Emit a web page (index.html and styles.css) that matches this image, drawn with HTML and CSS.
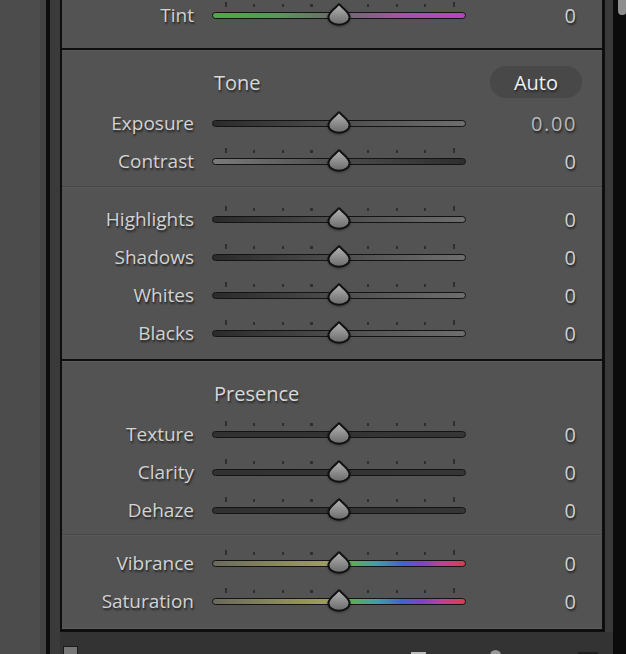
FILE: index.html
```html
<!DOCTYPE html>
<html>
<head>
<meta charset="utf-8">
<link rel="stylesheet" href="styles.css">
</head>
<body>
<div class="rail-a"></div>
<div class="rail-b"></div>
<div class="rail-c"></div>
<div class="rail-d"></div>
<div class="main">
  <div class="panel-wrap">
    <div class="panel">
      <div class="section first">
        <div class="row short">
          <span class="label">Tint</span>
          <div class="track tint"><svg class="thumb" viewBox="0 0 24 23"><use href="#drop"/></svg></div>
          <span class="value">0</span>
        </div>
      </div>

      <div class="section tone">
        <div class="head">
          <span class="title">Tone</span>
          <span class="auto">Auto</span>
        </div>
        <div class="group g1">
          <div class="row">
            <span class="label">Exposure</span>
            <div class="track up notick"><svg class="thumb" viewBox="0 0 24 23"><use href="#drop"/></svg></div>
            <span class="value dim">0.00</span>
          </div>
          <div class="row">
            <span class="label">Contrast</span>
            <div class="track down"><svg class="thumb" viewBox="0 0 24 23"><use href="#drop"/></svg></div>
            <span class="value">0</span>
          </div>
        </div>
        <div class="sep"></div>
        <div class="group g2">
          <div class="row">
            <span class="label">Highlights</span>
            <div class="track up"><svg class="thumb" viewBox="0 0 24 23"><use href="#drop"/></svg></div>
            <span class="value">0</span>
          </div>
          <div class="row">
            <span class="label">Shadows</span>
            <div class="track up"><svg class="thumb" viewBox="0 0 24 23"><use href="#drop"/></svg></div>
            <span class="value">0</span>
          </div>
          <div class="row">
            <span class="label">Whites</span>
            <div class="track up"><svg class="thumb" viewBox="0 0 24 23"><use href="#drop"/></svg></div>
            <span class="value">0</span>
          </div>
          <div class="row">
            <span class="label">Blacks</span>
            <div class="track up"><svg class="thumb" viewBox="0 0 24 23"><use href="#drop"/></svg></div>
            <span class="value">0</span>
          </div>
        </div>
      </div>

      <div class="section presence">
        <div class="head">
          <span class="title">Presence</span>
        </div>
        <div class="group g3">
          <div class="row">
            <span class="label">Texture</span>
            <div class="track flat"><svg class="thumb" viewBox="0 0 24 23"><use href="#drop"/></svg></div>
            <span class="value">0</span>
          </div>
          <div class="row">
            <span class="label">Clarity</span>
            <div class="track flat"><svg class="thumb" viewBox="0 0 24 23"><use href="#drop"/></svg></div>
            <span class="value">0</span>
          </div>
          <div class="row">
            <span class="label">Dehaze</span>
            <div class="track flat"><svg class="thumb" viewBox="0 0 24 23"><use href="#drop"/></svg></div>
            <span class="value">0</span>
          </div>
        </div>
        <div class="sep"></div>
        <div class="group g4">
          <div class="row">
            <span class="label">Vibrance</span>
            <div class="track rainbow"><svg class="thumb" viewBox="0 0 24 23"><use href="#drop"/></svg></div>
            <span class="value">0</span>
          </div>
          <div class="row">
            <span class="label">Saturation</span>
            <div class="track rainbow"><svg class="thumb" viewBox="0 0 24 23"><use href="#drop"/></svg></div>
            <span class="value">0</span>
          </div>
        </div>
      </div>
    </div>
  </div>
  <div class="footer">
    <span class="f-square"></span>
    <span class="f-light"></span>
    <span class="f-circle"></span>
    <span class="f-dark"></span>
  </div>
</div>
<div class="scroll"><span class="scroll-thumb"></span></div>

<svg class="defs" width="0" height="0">
  <defs>
    <linearGradient id="thumbFill" x1="0" y1="0" x2="0" y2="1">
      <stop offset="0" stop-color="#b4b4b4"/>
      <stop offset="1" stop-color="#6a6a6a"/>
    </linearGradient>
    <path id="drop" d="M12 1.2 C14.2 3.8 22.6 9.2 22.6 14 A10.6 7.8 0 0 1 1.4 14 C1.4 9.2 9.8 3.8 12 1.2 Z" fill="url(#thumbFill)" stroke="#111" stroke-width="2" stroke-linejoin="round"/>
  </defs>
</svg>
</body>
</html>
```

FILE: styles.css
```css
html, body {
  margin: 0;
  padding: 0;
}
body {
  width: 626px;
  height: 654px;
  overflow: hidden;
  display: flex;
  background: #4c4c4c;
  font-family: "Open Sans", "DejaVu Sans", sans-serif;
}
.defs {
  position: absolute;
  width: 0;
  height: 0;
}
.rail-a { width: 40px; background: #4c4c4c; }
.rail-b { width: 6px; background: #444444; }
.rail-c { width: 4px; background: #0e0e0e; }
.rail-d { width: 10px; background: #3a3a3a; }

.main {
  width: 553px;
  display: flex;
  flex-direction: column;
  background: #3a3a3a;
}
.panel-wrap {
  display: flex;
}
.panel {
  width: 540px;
  background: #535353;
  border-left: 2px solid #0e0e0e;
  border-right: 3px solid #0e0e0e;
  border-bottom: 3px solid #0e0e0e;
}
.section + .section {
  border-top: 2px solid #0e0e0e;
}
.section.first {
  padding-bottom: 18px;
}
.section.tone,
.section.presence {
  box-shadow: inset 0 1px 0 #5c5c5c;
}
.section.presence {
  border-bottom: 1px solid #5e5e5e;
}

.head {
  height: 44px;
  padding-top: 10px;
  padding-left: 152px;
  padding-right: 20px;
  display: flex;
  align-items: center;
  justify-content: space-between;
}
.title {
  font-size: 20px;
  color: #d8d8d8;
  text-shadow: 1px 2px 2px rgba(0, 0, 0, 0.55);
}
.auto {
  width: 92px;
  height: 32px;
  border-radius: 16px;
  background: #484848;
  color: #f0f0f0;
  font-size: 20px;
  display: flex;
  align-items: center;
  justify-content: center;
  text-shadow: 1px 2px 2px rgba(0, 0, 0, 0.5);
}

.group.g1 { padding-bottom: 6px; }
.group.g2 { padding-top: 12px; padding-bottom: 7px; }
.group.g3 { padding-bottom: 5px; }
.group.g4 { padding-top: 8px; padding-bottom: 8px; }

.sep {
  height: 1px;
  background: #474747;
  border-bottom: 1px solid #595959;
}

.row {
  height: 38px;
  display: flex;
  align-items: center;
}
.row.short {
  height: 30px;
}
.label {
  width: 132px;
  text-align: right;
  font-size: 19px;
  color: #d2d2d2;
  text-shadow: 1px 2px 2px rgba(0, 0, 0, 0.6);
  white-space: nowrap;
}
.value {
  flex: 1;
  text-align: right;
  padding-right: 26px;
  font-size: 20px;
  color: #cfcfcf;
  text-shadow: 1px 2px 2px rgba(0, 0, 0, 0.6);
}
.value.dim {
  color: #b9b9b9;
  letter-spacing: 1.6px;
  padding-right: 25px;
}

.track {
  position: relative;
  margin-left: 18px;
  width: 252px;
  height: 5px;
  border: 1px solid #141414;
  border-radius: 4px;
  background: #333;
}
.track::before {
  content: "";
  position: absolute;
  left: 12px;
  top: -9px;
  width: 232px;
  height: 3px;
  background: repeating-linear-gradient(90deg, #2f2f2f 0 2px, transparent 2px 28.5px);
}
.track::after {
  content: "";
  position: absolute;
  left: 12px;
  top: -11px;
  width: 230px;
  height: 5px;
  background:
    linear-gradient(#2f2f2f, #2f2f2f) left top / 2px 5px no-repeat,
    linear-gradient(#2f2f2f, #2f2f2f) right top / 2px 5px no-repeat;
}
.track.notick::before,
.track.notick::after {
  display: none;
}

.track.tint {
  background: linear-gradient(90deg, #4aaa4a 0%, #5d955d 25%, #6a6a6a 50%, #9a5a9a 72%, #c43cc4 100%);
}
.track.up {
  background: linear-gradient(90deg, #2b2b2b 0%, #4a4a4a 45%, #6e6e6e 100%);
}
.track.down {
  background: linear-gradient(90deg, #7a7a7a 0%, #4c4c4c 50%, #2e2e2e 100%);
}
.track.flat {
  background: linear-gradient(90deg, #313131 0%, #363636 100%);
}
.track.rainbow {
  background: linear-gradient(90deg, #6a6a5e 0%, #88885e 25%, #9e9e58 45%, #5aae5a 55%, #3ea0a6 65%, #4462d0 75%, #8042c8 83%, #c24092 91%, #d83e50 100%);
}

.thumb {
  position: absolute;
  left: 114px;
  top: -10px;
  width: 24px;
  height: 23px;
  overflow: visible;
  filter: drop-shadow(0 1px 1px rgba(0, 0, 0, 0.35));
}

.footer {
  flex: 1;
  background: #333333;
  display: flex;
  align-items: flex-start;
  overflow: hidden;
}
.f-square {
  margin-left: 3px;
  margin-top: 14px;
  width: 13px;
  height: 13px;
  background: #777;
  border: 1px solid #1c1c1c;
  flex: none;
}
.f-light {
  margin-left: 333px;
  margin-top: 20px;
  width: 15px;
  height: 10px;
  background: #bdbdbd;
  flex: none;
}
.f-circle {
  margin-left: 64px;
  margin-top: 18px;
  width: 11px;
  height: 11px;
  border-radius: 50%;
  background: #999;
  flex: none;
}
.f-dark {
  margin-left: 77px;
  margin-top: 20px;
  width: 20px;
  height: 10px;
  background: #1e1e1e;
  flex: none;
}

.scroll {
  width: 13px;
  background: #0b0b0b;
  display: flex;
  justify-content: flex-end;
  align-items: flex-start;
}
.scroll-thumb {
  width: 8px;
  height: 15px;
  background: #8e8e8e;
  border-radius: 0 0 3px 4px;
}
```
